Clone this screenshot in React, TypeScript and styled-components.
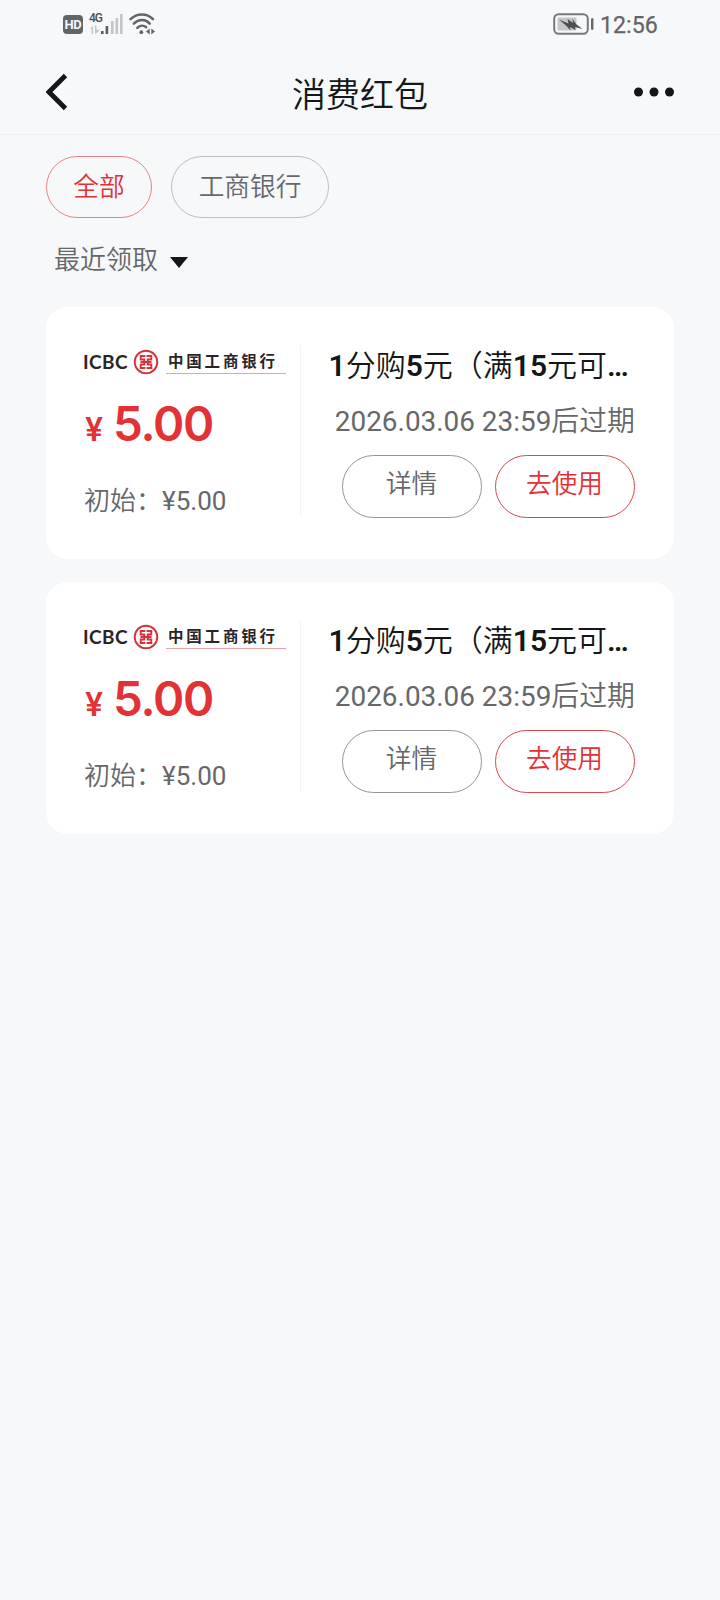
import React from "react";
import styled, { createGlobalStyle } from "styled-components";

const RED = "#e23236";
const INK = "#141617";
const GREY = "#666769";

const GlobalStyle = createGlobalStyle`
  * { box-sizing: border-box; }
  body {
    margin: 0;
    background: #f6f8fa;
    font-family: Roboto, "Noto Sans CJK SC", sans-serif;
    font-weight: 350;
    color: ${INK};
  }
  button {
    font: inherit;
    background: none;
    padding: 0;
    cursor: pointer;
  }
`;

const Screen = styled.div`
  width: 720px;
  min-height: 1600px;
  background: #f6f8fa;
`;

const StatusBar = styled.div`
  height: 48px;
  padding: 0 63px;
  display: flex;
  align-items: center;
  justify-content: space-between;
  color: #626465;
`;

const StatusGroup = styled.div`
  display: flex;
  align-items: center;
`;

const HdBadge = styled.span`
  width: 20px;
  height: 19px;
  margin-top: 1px;
  border-radius: 4px;
  background: #626465;
  color: #f6f8fa;
  font: 700 13px/20px Roboto, sans-serif;
  letter-spacing: -0.4px;
  text-align: center;
`;

const Signal = styled.div`
  width: 34px;
  height: 24px;
  margin-left: 6px;
  display: grid;
  > * { grid-area: 1 / 1; }
`;

const Network = styled.span`
  font: 500 12px/13px Roboto, sans-serif;
  letter-spacing: -1px;
  color: #4c4e4f;
`;

const Clock = styled.span`
  margin-left: 6px;
  padding-top: 2px;
  font: 400 23.2px/28px Roboto, sans-serif;
  -webkit-text-stroke: 0.25px #626465;
  width: 57px;
  white-space: nowrap;
`;

const Header = styled.header`
  height: 87px;
  padding: 0 46px;
  display: grid;
  grid-template-columns: 60px 1fr 60px;
  align-items: center;
  border-bottom: 1px solid #eceef0;
`;

const HeaderTitle = styled.h1`
  margin: 7px 0 0;
  font-size: 34px;
  line-height: 48px;
  font-weight: 350;
  text-align: center;
`;

const IconButton = styled.button<{ $end?: boolean }>`
  height: 48px;
  margin-top: 2px;
  border: 0;
  color: inherit;
  display: flex;
  align-items: center;
  justify-content: ${(p) => (p.$end ? "flex-end" : "flex-start")};
`;

const Filters = styled.nav`
  padding: 21px 46px 0;
  display: flex;
  gap: 19px;
`;

const Chip = styled.button<{ $active?: boolean; $width: number }>`
  width: ${(p) => p.$width}px;
  height: 62px;
  border: 1px solid ${(p) => (p.$active ? "#e58587" : "#bdbfc1")};
  border-radius: 31px;
  color: ${(p) => (p.$active ? RED : GREY)};
  font-size: 25.7px;
  line-height: 58px;
`;

const Sort = styled.div`
  padding: 22px 54px 0;
  height: 89px;
  display: flex;
  align-items: flex-start;
  gap: 12px;
  font-size: 26px;
  line-height: 40px;
  color: ${GREY};
  svg { margin-top: 17px; }
`;

const List = styled.main`
  padding: 0 46px;
  display: flex;
  flex-direction: column;
  gap: 23px;
`;

const Card = styled.article`
  height: 252px;
  padding: 38px 39px 42px 37px;
  border-radius: 22px;
  background: #fff;
  display: flex;
`;

const Amounts = styled.section`
  width: 218px;
  height: 172px;
  border-right: 1px solid #f3f4f5;
`;

const BankLogo = styled.div`
  height: 34px;
  display: flex;
  align-items: center;
  color: #2b2426;
`;

const BankCode = styled.span`
  width: 46px;
  font: 700 19px/24px Lato, sans-serif;
  letter-spacing: 0.4px;
`;

const BankName = styled.span`
  width: 120px;
  height: 23px;
  margin: 0 0 0 7px;
  padding-left: 2px;
  border-bottom: 1px solid #e9a3a3;
  font: 700 15.5px/18px "Noto Sans CJK SC", sans-serif;
  letter-spacing: 2.8px;
  white-space: nowrap;
`;

const Price = styled.div`
  height: 58px;
  margin-top: 16px;
  padding-left: 2px;
  display: flex;
  align-items: baseline;
  gap: 8px;
  color: ${RED};
  font-family: Inter, sans-serif;
  font-weight: 600;
  font-size: 47.5px;
  letter-spacing: -1.3px;
  line-height: 58px;
`;

const Currency = styled.span`
  font-size: 32px;
  letter-spacing: 0;
  width: 20px;
`;

const Initial = styled.div`
  margin-top: 28px;
  padding-left: 1px;
  font-size: 26px;
  line-height: 40px;
  color: ${GREY};
`;

const Digits = styled.span`
  font-weight: 400;
`;

const Details = styled.section`
  flex: 1;
  display: flex;
  flex-direction: column;
  align-items: flex-end;
`;

const OfferTitle = styled.h2`
  width: 306.5px;
  margin: 1px 0 0;
  font-size: 30px;
  line-height: 40px;
  font-weight: 350;
  white-space: nowrap;
  b { font-weight: 600; }
`;

const Expiry = styled.div`
  margin-top: 16px;
  font-size: 27.9px;
  line-height: 40px;
  color: ${GREY};
  white-space: nowrap;
`;

const Actions = styled.div`
  margin-top: 13px;
  display: flex;
  gap: 13px;
`;

const PillButton = styled.button<{ $primary?: boolean }>`
  width: 140px;
  height: 63px;
  border: 1px solid ${(p) => (p.$primary ? "#d8484a" : "#949596")};
  border-radius: 32px;
  color: ${(p) => (p.$primary ? RED : GREY)};
  font-size: 25.7px;
  line-height: 40px;
  padding: 0 1px 5px 0;
`;

const SignalBars = () => (
  <svg width="34" height="24" viewBox="0 0 34 24">
    <g fill="#c3c5c7">
      <path d="M1 16.500l3-2.500v8H2.600v-5.500zM6 13.500h1.400v4l3 .5-3 3.500H6z" />
      <rect x="22" y="9" width="2.600" height="13" />
      <rect x="26.500" y="6" width="2.600" height="16" />
      <rect x="31" y="2" width="2.600" height="20" />
    </g>
    <g fill="#5c5e5f">
      <rect x="12" y="19" width="2.600" height="3" />
      <rect x="16.600" y="14" width="2.600" height="8" />
    </g>
  </svg>
);

const Wifi = () => (
  <svg width="27" height="24" viewBox="0 0 27 24" style={{ marginLeft: 6 }}>
    <g fill="none" stroke="#626465" strokeWidth="2.500" strokeLinecap="round">
      <path d="M1.500 7.200C8 .8 18 .8 24 7.200" />
      <path d="M4.800 11.600C9.500 6.900 16.500 6.900 20.700 11.600" />
      <path d="M8.300 15.800c2.800-2.600 6.400-2.600 8.900-.6" />
    </g>
    <circle cx="12.300" cy="20.200" r="1.900" fill="#626465" />
    <path d="M20.700 16.500v6l-3.700-3zM22.300 16.500v6l3.700-3z" fill="#626465" />
  </svg>
);

const Battery = () => (
  <svg width="41" height="22" viewBox="0 0 41 22">
    <rect x="1.200" y="1.200" width="33.600" height="19.600" rx="4.500" fill="none" stroke="#77797a" strokeWidth="2" />
    <rect x="4.500" y="4.500" width="19" height="13" rx="1" fill="#c5c7c8" />
    <path d="M6 6.500l9.500 4-1-4.500 5.500 4-.5-4 4 5.500 6 4.500-7.500-2 .5 3-5.500-3 .5 3.500-4.500-5z" fill="#4c4e4f" />
    <rect x="38" y="5" width="2.400" height="12" rx="1.200" fill="#66686a" />
  </svg>
);

const BackArrow = () => (
  <svg width="22" height="38" viewBox="0 0 22 38" fill="none">
    <path d="M19.500 2.500L3 19l16.500 16.500" stroke={INK} strokeWidth="4.800" />
  </svg>
);

const More = () => (
  <svg width="40" height="10" viewBox="0 0 40 10" fill={INK}>
    <circle cx="4.500" cy="5" r="4.500" />
    <circle cx="20" cy="5" r="4.500" />
    <circle cx="35.500" cy="5" r="4.500" />
  </svg>
);

const IcbcMark = () => (
  <svg width="26" height="26" viewBox="0 0 26 26" fill="none" stroke="#d3343a" style={{ marginLeft: 4 }}>
    <circle cx="13" cy="13" r="11.300" strokeWidth="1.900" />
    <path
      strokeWidth="1.900"
      d="M12.400 7H7.700v3.500h3.600v5H7.700V19h4.700M13.600 7h4.700v3.500h-3.600v5h3.600V19h-4.700M7.500 13h11"
    />
  </svg>
);

const filters = [
  { label: "全部", width: 106, active: true },
  { label: "工商银行", width: 158, active: false },
];

const coupons = [
  { id: 1, amount: "5.00", initial: "5.00", expires: "2026.03.06 23:59" },
  { id: 2, amount: "5.00", initial: "5.00", expires: "2026.03.06 23:59" },
];

export default function App() {
  return (
    <Screen>
      <GlobalStyle />
      <StatusBar>
        <StatusGroup>
          <HdBadge>HD</HdBadge>
          <Signal>
            <SignalBars />
            <Network>4G</Network>
          </Signal>
          <Wifi />
        </StatusGroup>
        <StatusGroup>
          <Battery />
          <Clock>12:56</Clock>
        </StatusGroup>
      </StatusBar>
      <Header>
        <IconButton aria-label="返回"><BackArrow /></IconButton>
        <HeaderTitle>消费红包</HeaderTitle>
        <IconButton $end aria-label="更多"><More /></IconButton>
      </Header>
      <Filters>
        {filters.map((f) => (
          <Chip key={f.label} $width={f.width} $active={f.active}>{f.label}</Chip>
        ))}
      </Filters>
      <Sort>
        最近领取
        <svg width="18" height="11" viewBox="0 0 18 11"><path d="M0 0h18L9 11z" fill={INK} /></svg>
      </Sort>
      <List>
        {coupons.map((c) => (
          <Card key={c.id}>
            <Amounts>
              <BankLogo>
                <BankCode>ICBC</BankCode>
                <IcbcMark />
                <BankName>中国工商银行</BankName>
              </BankLogo>
              <Price><Currency>¥</Currency>{c.amount}</Price>
              <Initial>初始：<Digits>¥{c.initial}</Digits></Initial>
            </Amounts>
            <Details>
              <OfferTitle>
                <b>1</b>分购<b>5</b>元（满<b>15</b>元可<b>…</b>
              </OfferTitle>
              <Expiry><Digits>{c.expires}</Digits>后过期</Expiry>
              <Actions>
                <PillButton>详情</PillButton>
                <PillButton $primary>去使用</PillButton>
              </Actions>
            </Details>
          </Card>
        ))}
      </List>
    </Screen>
  );
}
